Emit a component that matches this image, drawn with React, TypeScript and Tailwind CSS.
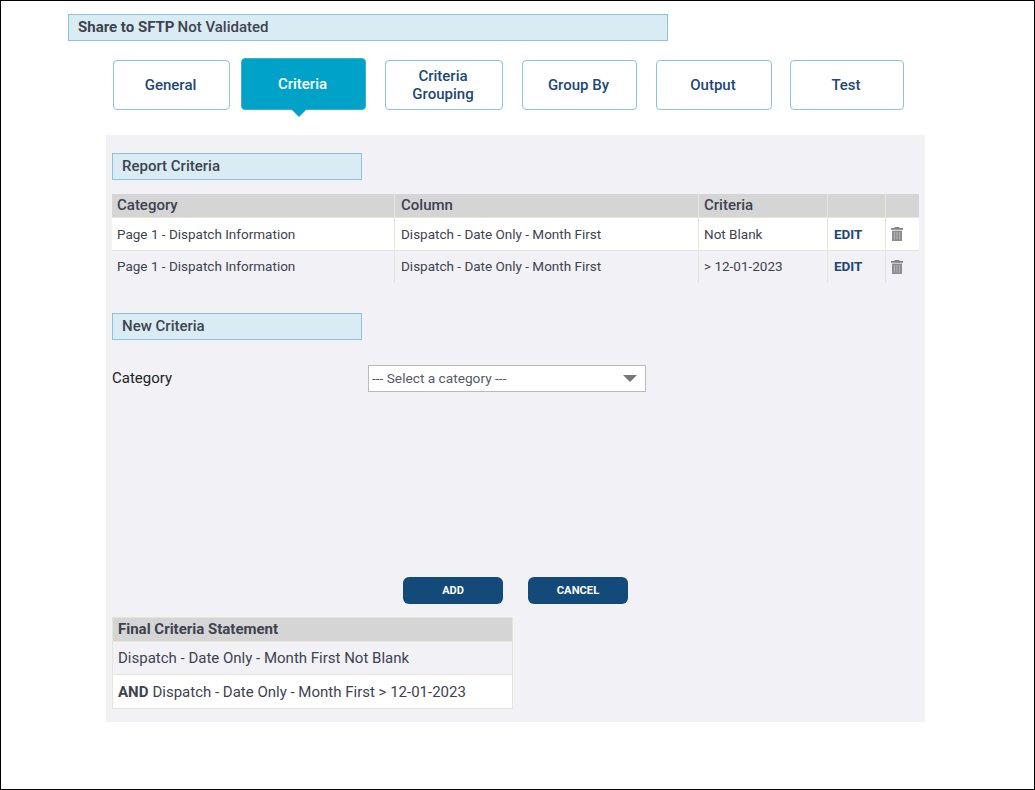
import React from 'react';

const tabs = [
  { label: 'General', className: 'w-[117px] ml-[113px]' },
  { label: 'Criteria', className: 'w-[125px] ml-[11px]', active: true },
  { label: 'Criteria Grouping', className: 'w-[118px] ml-[19px]' },
  { label: 'Group By', className: 'w-[115px] ml-[19px]' },
  { label: 'Output', className: 'w-[116px] ml-[19px]' },
  { label: 'Test', className: 'w-[114px] ml-[18px]' },
];

const rows = [
  { category: 'Page 1 - Dispatch Information', column: 'Dispatch - Date Only - Month First', criteria: 'Not Blank', bg: 'bg-white', height: 'h-[33px] border-b border-[#e6e6d8]' },
  { category: 'Page 1 - Dispatch Information', column: 'Dispatch - Date Only - Month First', criteria: '> 12-01-2023', bg: '', height: 'h-[31px]' },
];

const cols = 'grid grid-cols-[283px_304px_129px_58px_33px]';

const TrashIcon = () => (
  <svg width="12" height="14" viewBox="0 0 12 14">
    <path fill="#808085" d="M4 0h4l.6 1H12v1.8H0V1h3.4z" />
    <path fill="#8e8e92" d="M1 3.6h10V14H1z" />
    <path fill="#b4b4ba" d="M3 5h1v7.6H3zM5.5 5h1v7.6h-1zM8 5h1v7.6H8z" />
  </svg>
);

const SectionTitle: React.FC<{ title: string; className?: string }> = ({ title, className }) => (
  <div className={`w-[250px] h-[27px] flex items-center pl-[9px] bg-[#d9ebf3] border border-[#8cc4dc] text-[15px] font-medium text-[#3e4350] ${className ?? ''}`}>
    {title}
  </div>
);

export default function App() {
  return (
    <div className="w-[1035px] h-[790px] bg-white border border-black font-['Roboto',sans-serif] overflow-hidden">
      <div className="w-[600px] h-[27px] mt-[13px] ml-[67px] flex items-center pl-[9px] bg-[#d9ebf3] border border-[#8cc4dc] text-[15px] text-[#3e4350] font-medium">
        <span className="font-bold">Share to SFTP</span>
        <span className="ml-[3px]">Not Validated</span>
      </div>

      <div className="flex items-end h-[52px] mt-[17px] -ml-px">
        {tabs.map((tab) =>
          tab.active ? (
            <div key={tab.label} className={`relative h-[52px] flex items-center justify-center pr-[2px] rounded-[4px] bg-[#00a3c7] border border-[#3cb0cc] text-[15px] font-medium text-white ${tab.className}`}>
              {tab.label}
              <div className="absolute left-[49px] top-full w-0 h-0 border-x-[8px] border-x-transparent border-t-[8px] border-t-[#00a3c7]" />
            </div>
          ) : (
            <div key={tab.label} className={`h-[50px] flex items-center justify-center text-center rounded-[4px] bg-white border border-[#8cc4dc] text-[15px] leading-[18px] font-medium text-[#1c4878] pl-[19px] pr-[21px] ${tab.className}`}>
              {tab.label}
            </div>
          )
        )}
      </div>

      <div className="w-[819px] h-[587px] mt-[25px] ml-[105px] bg-[#f1f1f6] pt-[18px] px-[6px]">
        <SectionTitle title="Report Criteria" />

        <div className="w-[807px] mt-[14px] text-[#3e4350]">
          <div className={`${cols} h-[24px] bg-[#d5d5d5] border-b border-[#e6e6d8] text-[15px] font-medium`}>
            <div className="flex items-center pl-[5px] border-r border-[#e6e6d8]">Category</div>
            <div className="flex items-center pl-[6px] border-r border-[#e6e6d8]">Column</div>
            <div className="flex items-center pl-[5px] border-r border-[#e6e6d8]">Criteria</div>
            <div className="border-r border-[#e6e6d8]" />
            <div />
          </div>
          {rows.map((row, i) => (
            <div key={i} className={`${cols} ${row.height} text-[13.5px] ${row.bg}`}>
              <div className="flex items-center pl-[5px] border-r border-[#e6e6d8]">{row.category}</div>
              <div className="flex items-center pl-[6px] border-r border-[#e6e6d8]">{row.column}</div>
              <div className="flex items-center pl-[5px] border-r border-[#e6e6d8]">{row.criteria}</div>
              <div className="flex items-center pl-[6px] border-r border-[#e6e6d8] font-bold text-[#1c4878]">EDIT</div>
              <div className="flex items-center pl-[5px]"><TrashIcon /></div>
            </div>
          ))}
        </div>

        <SectionTitle title="New Criteria" className="mt-[31px]" />

        <div className="flex items-center mt-[25px] h-[27px]">
          <div className="w-[256px] text-[15px] text-[#222]">Category</div>
          <div className="w-[278px] h-[27px] flex items-center justify-between pl-[3px] pr-[8px] bg-white border border-[#b9b9be] text-[13.7px] text-[#555a66]">
            <span className="-mt-px">--- Select a category ---</span>
            <div className="w-0 h-0 border-x-[7px] border-x-transparent border-t-[7px] border-t-[#77777c]" />
          </div>
        </div>

        <div className="flex mt-[185px] ml-[291px] gap-[25px]">
          <div className="w-[100px] h-[27px] flex items-center justify-center pt-px rounded-[6px] bg-[#134a7a] text-[11px] font-bold text-white">ADD</div>
          <div className="w-[100px] h-[27px] flex items-center justify-center pt-px rounded-[6px] bg-[#134a7a] text-[11.2px] font-bold text-white">CANCEL</div>
        </div>

        <div className="w-[401px] mt-[13px] border border-[#e6e6d8] text-[15px] text-[#3e4350]">
          <div className="h-[23px] flex items-center pl-[5px] bg-[#d5d5d5] font-bold">Final Criteria Statement</div>
          <div className="h-[33px] flex items-center pl-[5px] border-t border-[#e6e6d8]">Dispatch - Date Only - Month First Not Blank</div>
          <div className="h-[34px] flex items-center pl-[5px] pt-px bg-white border-t border-[#e6e6d8]">
            <span className="font-bold mr-1">AND</span> Dispatch - Date Only - Month First &gt; 12-01-2023
          </div>
        </div>
      </div>
    </div>
  );
}
